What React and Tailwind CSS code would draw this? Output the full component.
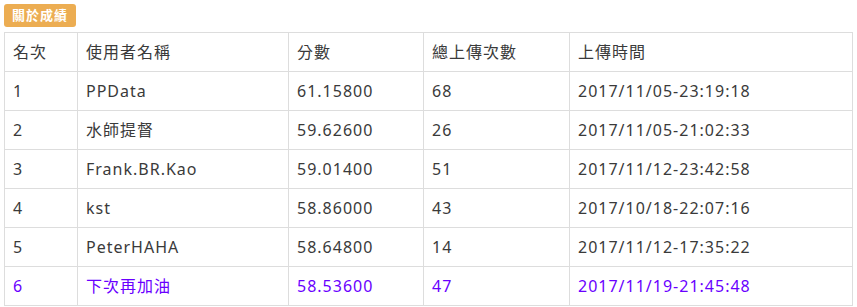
import React from "react";

const rows = [
  ["1", "PPData", "61.15800", "68", "2017/11/05-23:19:18"],
  ["2", "水師提督", "59.62600", "26", "2017/11/05-21:02:33"],
  ["3", "Frank.BR.Kao", "59.01400", "51", "2017/11/12-23:42:58"],
  ["4", "kst", "58.86000", "43", "2017/10/18-22:07:16"],
  ["5", "PeterHAHA", "58.64800", "14", "2017/11/12-17:35:22"],
  ["6", "下次再加油", "58.53600", "47", "2017/11/19-21:45:48"],
];

const widths = ["w-[73px]", "w-[211px]", "w-[135px]", "w-[146px]", "w-[283px]"];

export default function App() {
  return (
    <div
      className="bg-white w-[857px] h-[307px] overflow-hidden pt-[4px] pl-[4px] text-[#3a3a3a]"
      style={{ fontFamily: '"Noto Sans", "Noto Sans CJK TC", sans-serif' }}
    >
      <div className="flex">
        <span className="inline-flex items-center h-[23px] px-[8px] rounded-[3px] bg-[#ecad52] text-white text-[13px] font-bold tracking-[1px] leading-none">
          關於成績
        </span>
      </div>
      <table className="mt-[5px] border-collapse w-[848px] table-fixed text-[16px] tracking-[1px]">
        <colgroup>
          {widths.map((w, i) => (
            <col key={i} className={w} />
          ))}
        </colgroup>
        <thead>
          <tr>
            {["名次", "使用者名稱", "分數", "總上傳次數", "上傳時間"].map((h) => (
              <th
                key={h}
                className="border border-[#ddd] h-[39px] px-[8px] py-0 text-left font-normal leading-none"
              >
                {h}
              </th>
            ))}
          </tr>
        </thead>
        <tbody>
          {rows.map((r, i) => (
            <tr key={i} className={i === 5 ? "text-[#6a00ff]" : ""}>
              {r.map((c, j) => (
                <td
                  key={j}
                  className="border border-[#ddd] h-[39px] px-[8px] py-0 leading-none"
                >
                  {c}
                </td>
              ))}
            </tr>
          ))}
        </tbody>
      </table>
    </div>
  );
}
